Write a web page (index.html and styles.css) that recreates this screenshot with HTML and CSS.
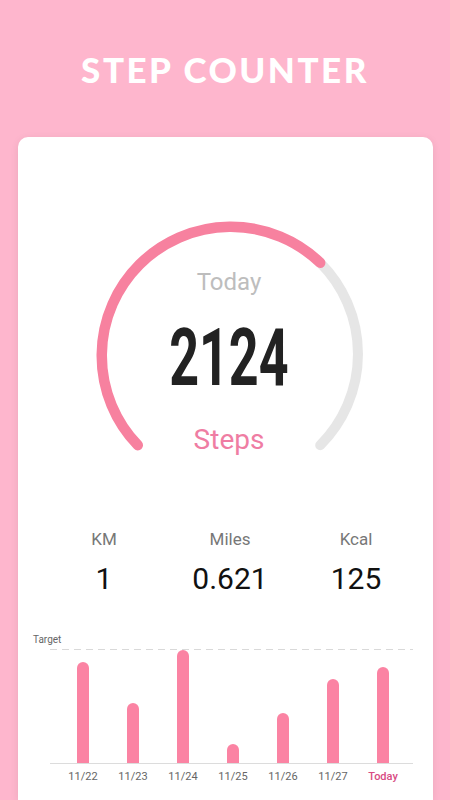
FILE: index.html
```html
<!DOCTYPE html>
<html lang="en">
<head>
  <meta charset="UTF-8" />
  <title>Step Counter</title>
  <meta name="viewport" content="width=device-width, initial-scale=1.0" />
  <link rel="stylesheet" href="styles.css">
</head>
<body>

  <div id="header">STEP COUNTER</div>

  <div id="card">
    <!-- Gauge -->
    <div id="gauge">
      <svg class="gauge-ring" width="270" height="270" viewBox="0 0 270 270">
        <path d="M 226.2 43.8 A 129 129 0 0 1 226.2 226.2" fill="none" stroke="#e6e6e6" stroke-width="10" stroke-linecap="round" />
        <path d="M 43.8 226.2 A 129 129 0 0 1 226.2 43.8" fill="none" stroke="#f7819f" stroke-width="10.5" stroke-linecap="round" />
      </svg>
      <div class="gauge-day">Today</div>
      <div class="gauge-count"><span>2124</span></div>
      <div class="gauge-unit">Steps</div>
    </div>

    <!-- Stats -->
    <div id="stats">
      <div class="stat">
        <div class="stat-label">KM</div>
        <div class="stat-value">1</div>
      </div>
      <div class="stat">
        <div class="stat-label">Miles</div>
        <div class="stat-value">0.621</div>
      </div>
      <div class="stat">
        <div class="stat-label">Kcal</div>
        <div class="stat-value">125</div>
      </div>
    </div>

    <!-- Weekly chart -->
    <div id="chart">
      <div class="chart-target">Target</div>
      <div class="chart-plot">
        <div class="bar-col"><div class="bar" style="height: 101px;"></div></div>
        <div class="bar-col"><div class="bar" style="height: 60px;"></div></div>
        <div class="bar-col"><div class="bar" style="height: 113px;"></div></div>
        <div class="bar-col"><div class="bar" style="height: 19px;"></div></div>
        <div class="bar-col"><div class="bar" style="height: 50px;"></div></div>
        <div class="bar-col"><div class="bar" style="height: 84px;"></div></div>
        <div class="bar-col"><div class="bar" style="height: 96px;"></div></div>
      </div>
      <div class="chart-labels">
        <span>11/22</span>
        <span>11/23</span>
        <span>11/24</span>
        <span>11/25</span>
        <span>11/26</span>
        <span>11/27</span>
        <span class="today">Today</span>
      </div>
    </div>
  </div>

</body>
</html>
```

FILE: styles.css
```css
body {
  margin: 0;
  height: 800px;
  overflow: hidden;
  background-color: #feb6cd;
  font-family: Roboto, Arial, sans-serif;
}

#header {
  padding: 49px 0 48px;
  font-family: Lato, "Open Sans", sans-serif;
  font-size: 35px;
  line-height: 40px;
  font-weight: 900;
  letter-spacing: 2.5px;
  color: white;
  text-align: center;
}

/* card runs on past the bottom of the screen */
#card {
  margin: 0 17px 0 18px;
  height: 663px;
  background-color: white;
  border-radius: 10px 10px 0 0;
  box-shadow: 0 2px 8px rgba(0, 0, 0, 0.08);
  overflow: hidden;
}

/* Gauge */
#gauge {
  position: relative;
  width: 270px;
  height: 270px;
  margin: 82px 0 0 76px;
  padding-top: 49px;
  box-sizing: border-box;
  text-align: center;
}

.gauge-ring {
  position: absolute;
  top: 0;
  left: 0;
}

.gauge-day {
  font-size: 24px;
  line-height: 28px;
  color: #bdbdbd;
}

.gauge-count {
  margin-top: 22px;
  font-size: 80px;
  line-height: 80px;
  font-weight: 700;
  color: #222;
}

.gauge-count span {
  display: inline-block;
  transform: scaleX(0.65);
}

.gauge-unit {
  margin-top: 25px;
  font-size: 28px;
  line-height: 34px;
  color: #ef7da3;
}

/* Stats */
#stats {
  display: grid;
  grid-template-columns: repeat(3, 126px);
  margin: 40px 0 0 23px;
  text-align: center;
}

.stat-label {
  font-size: 17px;
  line-height: 20px;
  color: #777;
}

.stat-value {
  margin-top: 12px;
  font-size: 30px;
  line-height: 36px;
  color: #111;
}

/* Chart */
#chart {
  margin: 37px 20px 0 15px;
}

.chart-target {
  font-size: 10px;
  line-height: 12px;
  color: #666;
}

.chart-plot {
  display: flex;
  align-items: flex-end;
  height: 114px;
  margin: 3px 0 0 17px;
  padding: 0 5px 0 8px;
  background-image: repeating-linear-gradient(to right, #d9d9d9 0 7px, transparent 7px 12px);
  background-size: 100% 1px;
  background-repeat: no-repeat;
  border-bottom: 1px solid #dcdcdc;
}

.bar-col {
  width: 50px;
  display: flex;
  justify-content: center;
}

.bar {
  width: 12px;
  background-color: #fb83a3;
  border-radius: 6px 6px 0 0;
}

.chart-labels {
  display: flex;
  margin: 6px 0 0 17px;
  padding: 0 5px 0 8px;
}

.chart-labels span {
  width: 50px;
  text-align: center;
  font-size: 11px;
  line-height: 14px;
  color: #666;
}

.chart-labels .today {
  color: #d84b83;
  font-weight: 500;
}
```
